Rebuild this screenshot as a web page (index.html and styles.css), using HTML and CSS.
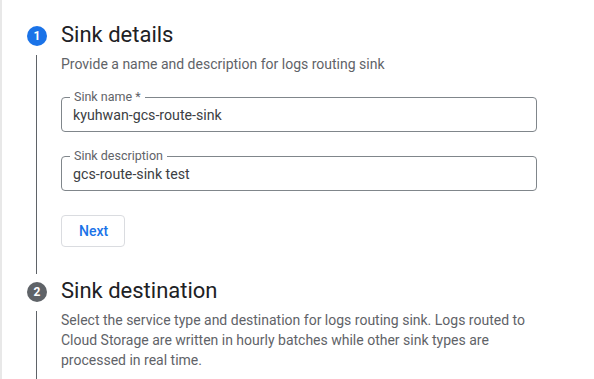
FILE: index.html
```html
<!DOCTYPE html>
<html>
<head>
<meta charset="UTF-8">
<meta name="viewport" content="width=device-width, initial-scale=1.0">
<title>Create logs routing sink</title>
<link rel="stylesheet" href="styles.css">
</head>
<body>
<div class="page">
	<div class="step">
		<div class="step-head">
			<span class="step-num active">1</span>
			<h2 class="step-title">Sink details</h2>
		</div>
		<div class="step-body">
			<div class="step-line"></div>
			<div class="step-content first">
				<p class="step-desc">Provide a name and description for logs routing sink</p>
				<fieldset class="field">
					<legend>Sink name *</legend>
					<input class="field-input" type="text" value="kyuhwan-gcs-route-sink">
				</fieldset>
				<fieldset class="field">
					<legend>Sink description</legend>
					<input class="field-input" type="text" value="gcs-route-sink test">
				</fieldset>
				<button class="btn-next" type="button">Next</button>
			</div>
		</div>
	</div>
	<div class="step">
		<div class="step-head">
			<span class="step-num">2</span>
			<h2 class="step-title">Sink destination</h2>
		</div>
		<div class="step-body">
			<div class="step-line"></div>
			<div class="step-content">
				<p class="step-desc">Select the service type and destination for logs routing sink. Logs routed to Cloud Storage are written in hourly batches while other sink types are processed in real time.</p>
			</div>
		</div>
	</div>
</div>
</body>
</html>
```

FILE: styles.css
```css
html, body {
	margin: 0;
	height: 100%;
	background: #fff;
}
body {
	font-family: Roboto, "Liberation Sans", Arial, sans-serif;
	color: #202124;
	overflow: hidden;
}
.page {
	border-left: 2px solid #e8e8e8;
	min-height: 100%;
	box-sizing: border-box;
	padding: 21px 57px 0 25px;
}
.step-head {
	display: flex;
	align-items: center;
	gap: 14px;
	height: 28px;
}
.step-num {
	flex: none;
	width: 20px;
	height: 20px;
	margin-top: 2px;
	border-radius: 50%;
	background: #5f6368;
	color: #fff;
	font-size: 12px;
	font-weight: 700;
	line-height: 20px;
	text-align: center;
}
.step-num.active {
	background: #1a73e8;
}
.step-title {
	margin: 0;
	font-size: 22px;
	font-weight: 400;
	line-height: 28px;
	color: #202124;
}
.step-body {
	display: grid;
	grid-template-columns: 20px 1fr;
	column-gap: 14px;
}
.step-line {
	width: 1px;
	margin: 6px 0 3px 9px;
	background: #5f6368;
}
.step-content {
	padding-bottom: 40px;
}
.step-content.first {
	padding-bottom: 30px;
}
.step-desc {
	margin: 5px 0 0;
	font-size: 14px;
	line-height: 20px;
	color: #5f6368;
}
.field {
	margin: 15px 0 0;
	padding: 0 12px 6px 8px;
	border: 1px solid #80868b;
	border-radius: 4px;
	min-width: 0;
}
.field + .field {
	margin-top: 16px;
}
.field legend {
	margin-left: 0;
	padding: 0 4px;
	font-size: 12.5px;
	line-height: 16px;
	color: #5f6368;
}
.field-input {
	display: block;
	width: 100%;
	box-sizing: border-box;
	height: 20px;
	margin: 0 0 0 3px;
	padding: 0;
	border: none;
	outline: none;
	background: transparent;
	font-family: inherit;
	font-size: 14.2px;
	color: #3c4043;
}
.btn-next {
	display: block;
	margin-top: 24px;
	height: 32px;
	padding: 0 16px 0 17px;
	border: 1px solid #dadce0;
	border-radius: 4px;
	background: #fff;
	font-family: inherit;
	font-size: 14px;
	font-weight: 500;
	color: #1a73e8;
}
```
